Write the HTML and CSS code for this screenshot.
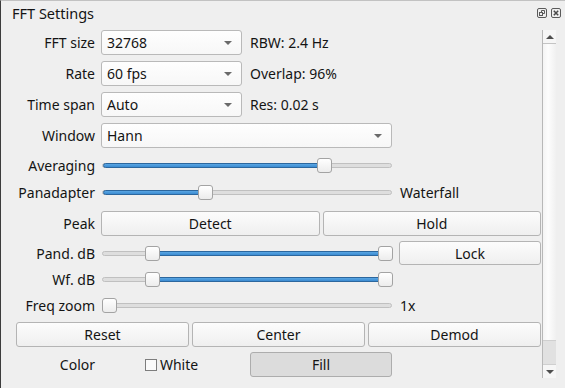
FILE: index.html
```html
<!DOCTYPE html>
<html lang="en">

<head>
    <meta charset="UTF-8">
    <meta name="viewport" content="width=device-width, initial-scale=1.0">
    <title>FFT Settings</title>
    <link rel="stylesheet" href="styles.css">
</head>

<body>
    <div class="dock">
        <div class="dock-title">
            <span class="dock-name">FFT Settings</span>
            <span class="dock-buttons">
                <svg class="dock-btn" width="10" height="10" viewBox="0 0 10 10">
                    <rect x="0.5" y="0.5" width="9" height="9" rx="1.5" fill="none" stroke="#5a5a5a"/>
                    <rect x="2.5" y="4.5" width="3" height="3" fill="none" stroke="#5a5a5a"/>
                    <path d="M4.5 4.5V2.5H7.5V5.5H5.5" fill="none" stroke="#5a5a5a"/>
                </svg>
                <svg class="dock-btn" width="10" height="10" viewBox="0 0 10 10">
                    <rect x="0.5" y="0.5" width="9" height="9" rx="1.5" fill="none" stroke="#5a5a5a"/>
                    <path d="M2.8 2.8L7.2 7.2M7.2 2.8L2.8 7.2" stroke="#4a4a4a" stroke-width="1.5"/>
                </svg>
            </span>
        </div>

        <div class="dock-body">
            <div class="form">
                <div class="row">
                    <label class="lbl">FFT size</label>
                    <div class="combo combo-short"><span>32768</span><i class="combo-arrow"></i></div>
                    <span class="info">RBW: 2.4 Hz</span>
                </div>
                <div class="row">
                    <label class="lbl">Rate</label>
                    <div class="combo combo-short"><span>60 fps</span><i class="combo-arrow"></i></div>
                    <span class="info">Overlap: 96%</span>
                </div>
                <div class="row">
                    <label class="lbl">Time span</label>
                    <div class="combo combo-short"><span>Auto</span><i class="combo-arrow"></i></div>
                    <span class="info">Res: 0.02 s</span>
                </div>
                <div class="row">
                    <label class="lbl">Window</label>
                    <div class="combo combo-wide"><span>Hann</span><i class="combo-arrow"></i></div>
                </div>

                <div class="row row-slider mt6">
                    <label class="lbl">Averaging</label>
                    <div class="slider">
                        <div class="groove"><div class="fill" style="left: 0; width: 222px;"></div></div>
                        <div class="handle" style="left: 216px;"></div>
                    </div>
                </div>
                <div class="row row-slider mt5">
                    <label class="lbl">Panadapter</label>
                    <div class="slider">
                        <div class="groove"><div class="fill" style="left: 0; width: 103px;"></div></div>
                        <div class="handle" style="left: 97px;"></div>
                    </div>
                    <span class="info">Waterfall</span>
                </div>
                <div class="row mt8">
                    <label class="lbl">Peak</label>
                    <div class="btn-group">
                        <button class="btn">Detect</button>
                        <button class="btn">Hold</button>
                    </div>
                </div>
                <div class="row row-lock mt5">
                    <label class="lbl">Pand. dB</label>
                    <div class="slider">
                        <div class="groove"><div class="fill" style="left: 50px; width: 233px;"></div></div>
                        <div class="handle" style="left: 44px;"></div>
                        <div class="handle" style="left: 277px;"></div>
                    </div>
                    <button class="btn btn-lock">Lock</button>
                </div>
                <div class="row row-slider mt3">
                    <label class="lbl">Wf. dB</label>
                    <div class="slider">
                        <div class="groove"><div class="fill" style="left: 50px; width: 233px;"></div></div>
                        <div class="handle" style="left: 44px;"></div>
                        <div class="handle" style="left: 277px;"></div>
                    </div>
                </div>
                <div class="row row-slider mt4">
                    <label class="lbl">Freq zoom</label>
                    <div class="slider">
                        <div class="groove"></div>
                        <div class="handle" style="left: 1px;"></div>
                    </div>
                    <span class="info">1x</span>
                </div>
                <div class="row mt6">
                    <div class="btn-group btn-group-full">
                        <button class="btn">Reset</button>
                        <button class="btn">Center</button>
                        <button class="btn">Demod</button>
                    </div>
                </div>
                <div class="row mt5">
                    <label class="lbl">Color</label>
                    <div class="check-cell">
                        <span class="check"></span>
                        <span>White</span>
                    </div>
                    <button class="btn btn-fill">Fill</button>
                </div>
            </div>

            <div class="scrollbar">
                <div class="sb-btn sb-up"><i class="sb-arrow-up"></i></div>
                <div class="sb-track"><div class="sb-thumb"></div></div>
                <div class="sb-btn sb-down"><i class="sb-arrow-down"></i></div>
            </div>
        </div>
    </div>
</body>

</html>
```
FILE: styles.css
```css
body {
    margin: 0;
    overflow: hidden;
    background-color: #efefef;
    font-family: "Noto Sans", "DejaVu Sans", sans-serif;
    font-size: 14px;
    color: #141414;
}

.dock {
    height: 387px;
    border-top: 1px solid #c2c2c2;
    border-left: 1px solid #3c3c3c;
}

.dock-title {
    display: flex;
    align-items: center;
    justify-content: space-between;
    height: 23px;
    padding: 0 4px 0 11px;
}

.dock-name {
    font-size: 14.5px;
}

.dock-buttons {
    display: flex;
    gap: 4px;
    margin-top: 1px;
}

.dock-btn {
    display: block;
}

.dock-body {
    display: flex;
    align-items: flex-start;
    padding-top: 6px;
}

.form {
    width: 525px;
    padding-left: 15px;
}

/* one line of the form */
.row {
    display: flex;
    align-items: center;
    height: 25px;
    margin-top: 6px;
}

.row:first-child {
    margin-top: 0;
}

.row-slider {
    height: 22px;
}

.row-lock {
    height: 24px;
}

.mt3 { margin-top: 3px; }
.mt4 { margin-top: 4px; }
.mt5 { margin-top: 5px; }
.mt6 { margin-top: 6px; }
.mt8 { margin-top: 8px; }

.lbl {
    width: 79px;
    margin-right: 6px;
    text-align: right;
    white-space: nowrap;
}

.info {
    margin-left: 8px;
    white-space: nowrap;
}

/* combo boxes */
.combo {
    box-sizing: border-box;
    display: flex;
    align-items: center;
    justify-content: space-between;
    height: 25px;
    padding: 0 9px 0 5px;
    border: 1px solid #b9b9b9;
    border-radius: 3px;
    background: linear-gradient(#fefefe, #f7f7f7);
}

.combo-short {
    width: 141px;
}

.combo-wide {
    width: 291px;
}

.combo-arrow {
    width: 0;
    height: 0;
    border-left: 4px solid transparent;
    border-right: 4px solid transparent;
    border-top: 4px solid #6a6a6a;
}

/* sliders */
.slider {
    position: relative;
    display: flex;
    align-items: center;
    width: 290px;
    height: 22px;
    padding-left: 1px;
}

.groove {
    position: relative;
    box-sizing: border-box;
    width: 100%;
    height: 5px;
    border: 1px solid #c0c0c0;
    border-radius: 3px;
    background-color: #dedede;
}

.fill {
    position: absolute;
    top: -1px;
    bottom: -1px;
    border: 1px solid #2c679e;
    border-radius: 3px;
    background: linear-gradient(#5aa6e3, #3b8bd1);
}

.handle {
    position: absolute;
    top: 4px;
    box-sizing: border-box;
    width: 15px;
    height: 15px;
    border: 1px solid #a3a3a3;
    border-radius: 3px;
    background: linear-gradient(#ffffff, #ececec);
}

/* push buttons */
.btn {
    box-sizing: border-box;
    height: 25px;
    padding: 0;
    border: 1px solid #b4b4b4;
    border-radius: 3px;
    background: linear-gradient(#fcfcfc, #efefef);
    font-family: inherit;
    font-size: 14px;
    color: #141414;
}

.btn-group {
    display: flex;
    flex: 1;
    gap: 3px;
}

.btn-group .btn {
    flex: 1;
}

.btn-lock {
    width: 142px;
    height: 24px;
    margin-left: 7px;
}

.btn-fill {
    width: 142px;
    margin-left: 8px;
    border-color: #adadad;
    background: #dcdcdc;
}

.check-cell {
    display: flex;
    align-items: center;
    justify-content: center;
    gap: 3px;
    width: 141px;
}

.check {
    box-sizing: border-box;
    width: 12px;
    height: 12px;
    border: 1px solid #7d7d7d;
    background-color: #fafafa;
}

/* vertical scroll bar */
.scrollbar {
    display: flex;
    flex-direction: column;
    box-sizing: border-box;
    width: 14px;
    height: 348px;
    margin-left: 1px;
    border-left: 1px solid #b8b8b8;
}

.sb-btn {
    display: flex;
    align-items: center;
    justify-content: center;
    height: 13px;
    background-color: #f6f6f6;
}

.sb-up {
    border-bottom: 1px solid #c4c4c4;
}

.sb-arrow-up,
.sb-arrow-down {
    width: 0;
    height: 0;
    border-left: 4px solid transparent;
    border-right: 4px solid transparent;
}

.sb-arrow-up {
    border-bottom: 4px solid #4e4e4e;
}

.sb-arrow-down {
    border-top: 4px solid #4e4e4e;
}

.sb-track {
    display: flex;
    flex-direction: column;
    justify-content: flex-end;
    flex: 1;
    background: linear-gradient(to right, #f4f4f4, #fdfdfd 40%, #f0f0f0);
}

.sb-thumb {
    height: 23px;
    border-top: 1px solid #cfcfcf;
    border-bottom: 1px solid #cfcfcf;
    background-color: #e1e1e1;
}
```
